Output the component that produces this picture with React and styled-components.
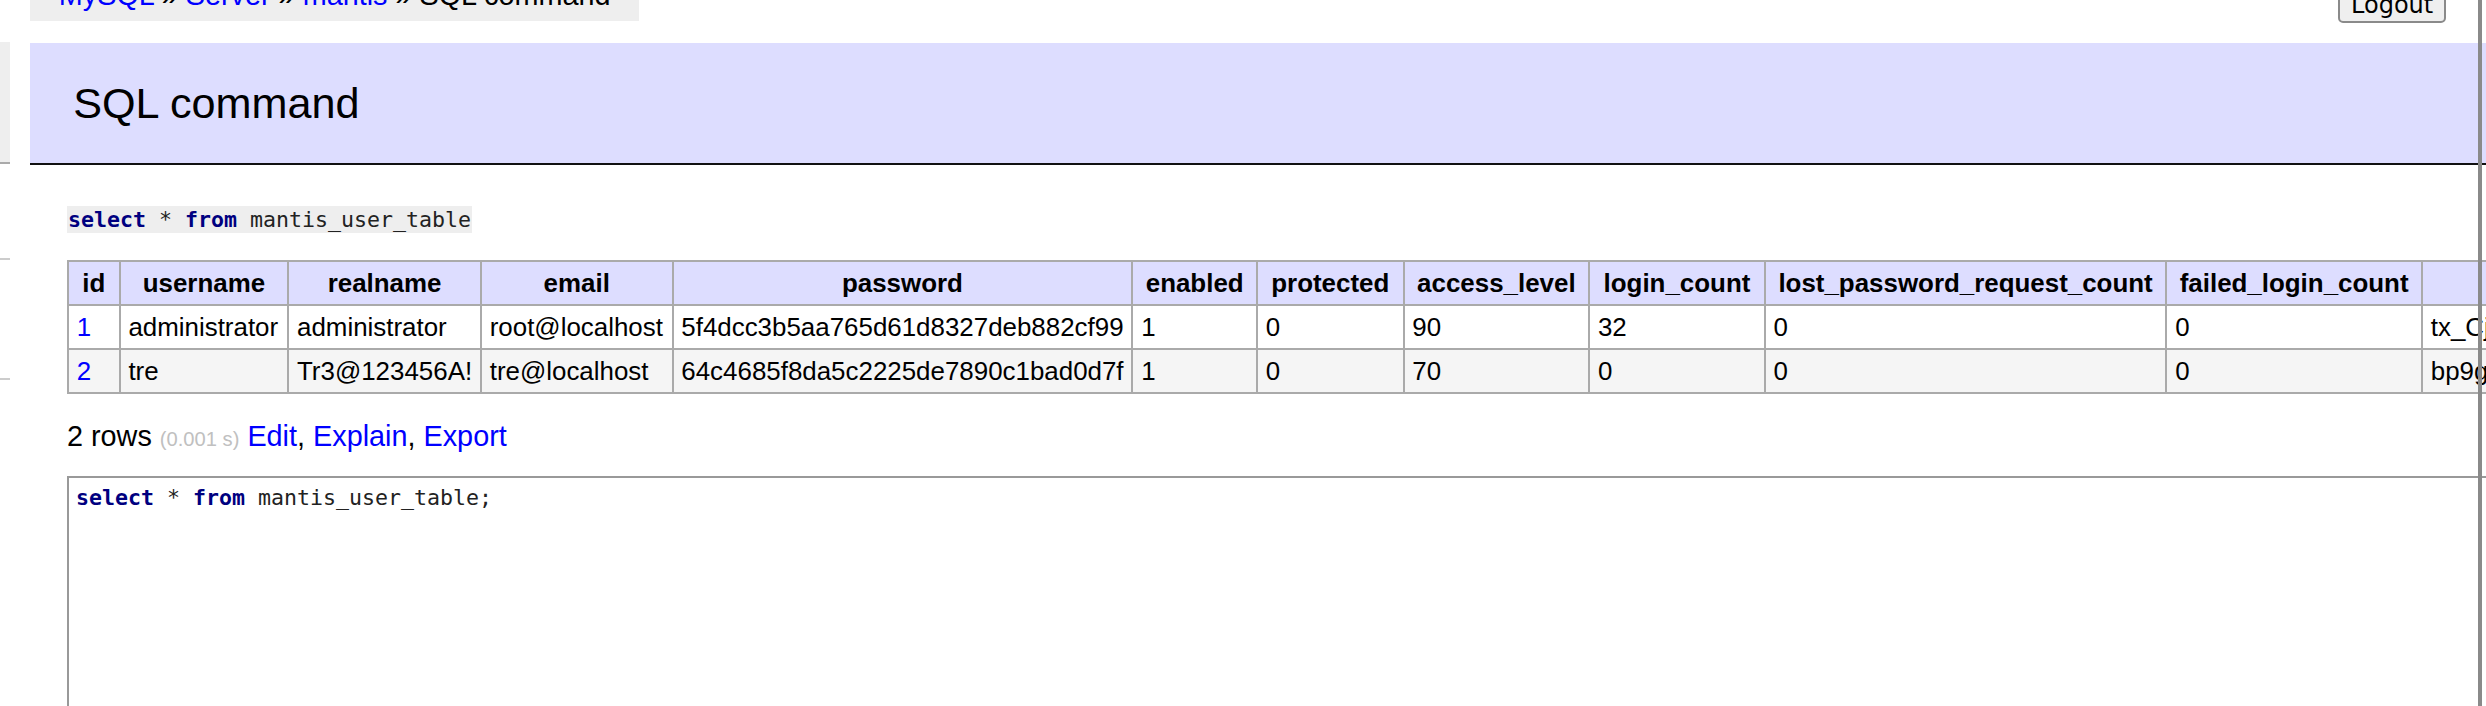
import styled, { createGlobalStyle } from "styled-components";

const Global = createGlobalStyle`
  html, body {
    margin: 0;
    padding: 0;
    overflow: hidden;
    background: #fff;
  }
  body {
    font: 28.8px/1.25 "Liberation Sans", Arial, sans-serif;
    color: #000;
  }
  a {
    color: #00f;
    text-decoration: none;
  }
`;

const Frame = styled.div`
  position: relative;
  display: flex;
  align-items: flex-start;
  width: 2486px;
  height: 706px;
  overflow: hidden;
`;

// what is left of the db menu on the far left
const Side = styled.aside`
  flex: 0 0 10px;
  display: flex;
  flex-direction: column;
`;
const SideBlock = styled.div`
  flex-shrink: 0;
  margin-top: 42px;
  height: 120px;
  background: #eee;
  border-bottom: 2px solid #aaa;
`;
const SideRule = styled.div`
  flex-shrink: 0;
  margin-top: ${(p) => p.$gap}px;
  height: 2px;
  background: #ccc;
`;

const Main = styled.main`
  flex: 1;
  min-width: 0;
  margin-left: 20px;
`;

const TopBar = styled.header`
  display: flex;
  justify-content: space-between;
  align-items: flex-start;
  height: 43px;
  padding-right: 40px;
`;

const Crumbs = styled.nav`
  height: 21px;
  overflow: hidden;
  background: #eee;
  padding: 0 28.8px;
  white-space: nowrap;
`;
const CrumbLine = styled.div`
  line-height: 51.84px;
  margin-top: -29.9px;
`;

const LogoutButton = styled.button`
  margin-top: -12.5px;
  font: 24px "DejaVu Sans", sans-serif;
  line-height: normal;
  padding: 1.8px 10.8px;
  border: 2px solid #8a8a8a;
  border-radius: 5px;
  background: #efefef;
  color: #000;
`;

const Heading = styled.h2`
  margin: 0;
  padding: 33px 43.2px;
  font-size: 43.2px;
  font-weight: normal;
  line-height: 54px;
  background: #ddf;
  border-bottom: 2px solid #111;
`;

const Content = styled.section`
  padding-left: 37px;
`;

const QueryLine = styled.p`
  display: flex;
  margin: 41px 0 0;
`;
const Code = styled.code`
  height: 27px;
  padding: 0 1px;
  font: 21.6px/27px "DejaVu Sans Mono", monospace;
  background: #eee;
  color: #222;
  white-space: pre;
`;
const Kw = styled.b`
  color: #000080;
`;

const Grid = styled.table`
  width: max-content;
  margin-top: 27px;
  border-collapse: collapse;
  border: 2px solid #aaa;
  font-size: 25.92px;
  line-height: 32px;
  white-space: nowrap;
  tbody tr:nth-child(2n) {
    background: #f5f5f5;
  }
`;
const Th = styled.th`
  width: ${(p) => (p.$w ? `${p.$w - 18}px` : "auto")};
  padding: 5px 7.8px;
  border: 2px solid #aaa;
  background: #ddf;
  text-align: center;
  font-weight: bold;
`;
const Td = styled.td`
  padding: 5px 7.8px;
  border: 2px solid #aaa;
  text-align: left;
`;

const Stats = styled.p`
  margin: 25px 0 0;
`;
const Time = styled.span`
  color: #c0c0c0;
  font-size: 20.16px;
`;

const Editor = styled.pre`
  margin: 21px 0 0;
  width: 2500px;
  height: 300px;
  padding: 6px 7px;
  border: 2px solid #999;
  font: 21.6px/27px "DejaVu Sans Mono", monospace;
  color: #222;
`;

const SplitLine = styled.div`
  position: absolute;
  top: 0;
  bottom: 0;
  left: 2478px;
  width: 4px;
  background: #8a8a8a;
`;

const columns = [
  { name: "id", w: 52 },
  { name: "username", w: 169 },
  { name: "realname", w: 192 },
  { name: "email", w: 192 },
  { name: "password", w: 460 },
  { name: "enabled", w: 125 },
  { name: "protected", w: 147 },
  { name: "access_level", w: 186 },
  { name: "login_count", w: 176 },
  { name: "lost_password_request_count", w: 402 },
  { name: "failed_login_count", w: 256 },
  { name: "cookie_string" },
  { name: "last_visit" },
  { name: "date_created" },
];

const rows = [
  [
    "1",
    "administrator",
    "administrator",
    "root@localhost",
    "5f4dcc3b5aa765d61d8327deb882cf99",
    "1",
    "0",
    "90",
    "32",
    "0",
    "0",
    "tx_CjsS0nBzqZ8xU9wQmT4yKbL2hVgRfE1aP7oNcXiD3uWeH5lY6kJ0rMvI8tGpFd",
    "1597012521",
    "1596952342",
  ],
  [
    "2",
    "tre",
    "Tr3@123456A!",
    "tre@localhost",
    "64c4685f8da5c2225de7890c1bad0d7f",
    "1",
    "0",
    "70",
    "0",
    "0",
    "0",
    "bp9gN2kLxQ7wR4tYvZ1mC8sH3jD6fA0eU5oP9iKbT2nM7cX4lV1yG8rW3qS6hJ0z",
    "1597012123",
    "1596956781",
  ],
];

const App = () => {
  return (
    <Frame>
      <Global />
      <Side>
        <SideBlock />
        <SideRule $gap={94} />
        <SideRule $gap={118} />
      </Side>
      <Main>
        <TopBar>
          <Crumbs>
            <CrumbLine>
              <a href="#">MySQL</a> » <a href="#">Server</a> » <a href="#">mantis</a> » SQL command
            </CrumbLine>
          </Crumbs>
          <LogoutButton>Logout</LogoutButton>
        </TopBar>
        <Heading>SQL command</Heading>
        <Content>
          <QueryLine>
            <Code>
              <Kw>select</Kw> * <Kw>from</Kw> mantis_user_table
            </Code>
          </QueryLine>
          <Grid>
            <thead>
              <tr>
                {columns.map((c) => (
                  <Th key={c.name} $w={c.w}>
                    {c.name}
                  </Th>
                ))}
              </tr>
            </thead>
            <tbody>
              {rows.map((r) => (
                <tr key={r[0]}>
                  {r.map((v, i) => (
                    <Td key={i}>{i === 0 ? <a href="#">{v}</a> : v}</Td>
                  ))}
                </tr>
              ))}
            </tbody>
          </Grid>
          <Stats>
            2 rows <Time>(0.001 s)</Time> <a href="#">Edit</a>, <a href="#">Explain</a>,{" "}
            <a href="#">Export</a>
          </Stats>
          <Editor>
            <Kw>select</Kw> * <Kw>from</Kw> mantis_user_table;
          </Editor>
        </Content>
      </Main>
      <SplitLine />
    </Frame>
  );
};

export default App;
